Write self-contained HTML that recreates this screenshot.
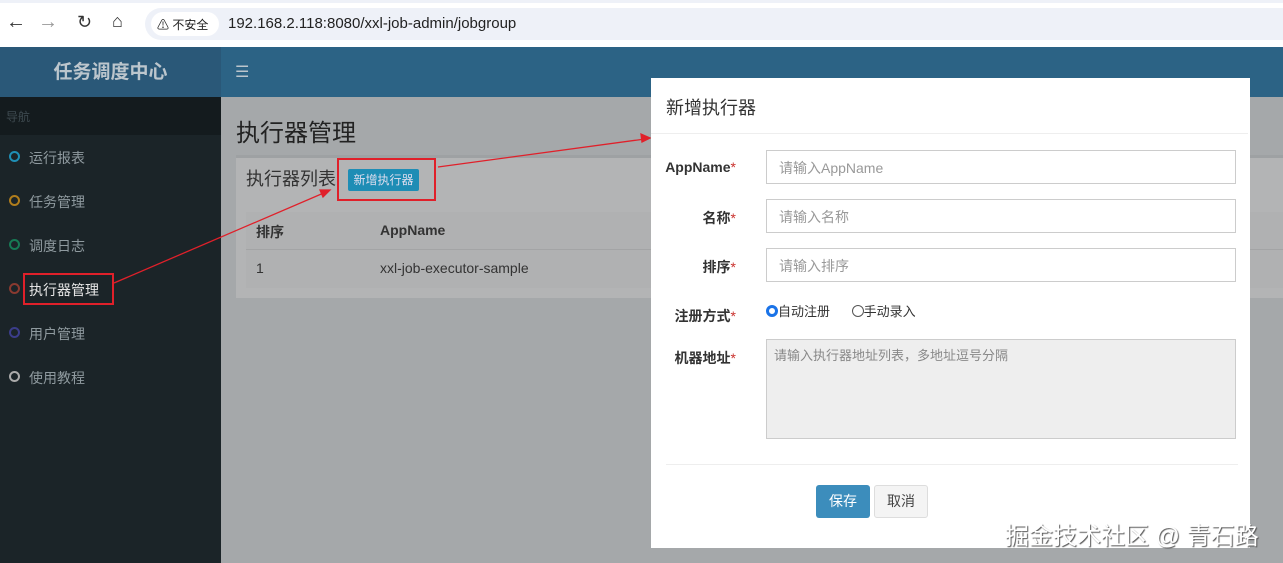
<!DOCTYPE html>
<html><head><meta charset="utf-8"><style>
*{box-sizing:border-box;margin:0;padding:0}
body{width:1283px;height:563px;overflow:hidden;position:relative;font-family:"Liberation Sans","Noto Sans CJK SC",sans-serif;background:#a5a8aa}
.abs{position:absolute}
.lbl{position:absolute;font-weight:bold;font-size:14px;color:#333;text-align:right;width:90px;left:646px}
.lbl i{color:#c9302c;font-style:normal;font-weight:normal}
.inp{position:absolute;left:766px;width:470px;height:34px;border:1px solid #ccc;background:#fff;font-size:14px;color:#999;padding:7px 12px}
.nav{position:absolute;left:29px;font-size:14px;color:#8f9a9f}
.ring{position:absolute;left:9px;width:11px;height:11px;border-radius:50%;border:2px solid}
</style></head><body>
<div class="abs" style="left:0;top:0;width:1283px;height:47px;background:#fff;border-top:3px solid #eef1f8"></div>
<div class="abs" style="left:6px;top:11px;font-size:20px;color:#333">&#8592;</div>
<div class="abs" style="left:38px;top:11px;font-size:20px;color:#999">&#8594;</div>
<div class="abs" style="left:77px;top:12px;font-size:18px;color:#333">&#8635;</div>
<div class="abs" style="left:112px;top:11px;font-size:18px;color:#333">&#8962;</div>
<div class="abs" style="left:145px;top:8px;width:1138px;height:32px;background:#eef1f8;border-radius:16px 0 0 16px"></div>
<div class="abs" style="left:151px;top:12px;width:68px;height:24px;background:#fff;border-radius:12px;font-size:12px;color:#222;padding:4px 6px">&#9888; 不安全</div>
<div class="abs" style="left:228px;top:15px;font-size:15px;color:#222">192.168.2.118:8080/xxl-job-admin/jobgroup</div>
<div class="abs" style="left:0;top:47px;width:221px;height:50px;background:#2a5878;color:#bcc6cd;font-weight:bold;font-size:19px;text-align:center;line-height:52px">任务调度中心</div>
<div class="abs" style="left:221px;top:47px;width:1062px;height:50px;background:#2c6385"></div>
<div class="abs" style="left:235px;top:62px;color:#bcc6cd;font-size:16px">&#9776;</div>
<div class="abs" style="left:0;top:97px;width:221px;height:466px;background:#1b2428"></div>
<div class="abs" style="left:0;top:97px;width:221px;height:38px;background:#141b1e;color:#3e4a50;font-size:12px;padding:11px 6px">导航</div>
<div class="ring" style="top:151px;border-color:#1f8fb5"></div><div class="nav" style="top:148px">运行报表</div>
<div class="ring" style="top:195px;border-color:#b07d1c"></div><div class="nav" style="top:192px">任务管理</div>
<div class="ring" style="top:239px;border-color:#177a55"></div><div class="nav" style="top:236px">调度日志</div>
<div class="ring" style="top:283px;border-color:#8a3a30"></div><div class="nav" style="top:280px;color:#e6e6e6">执行器管理</div>
<div class="ring" style="top:327px;border-color:#3b3d8a"></div><div class="nav" style="top:324px">用户管理</div>
<div class="ring" style="top:371px;border-color:#aaa"></div><div class="nav" style="top:368px">使用教程</div>
<div class="abs" style="left:23px;top:273px;width:91px;height:32px;border:2px solid #e0202a"></div>
<div class="abs" style="left:236px;top:113px;font-size:24px;color:#222">执行器管理</div>
<div class="abs" style="left:236px;top:155px;width:1047px;height:143px;background:#b3b4b5;border-top:3px solid #9ea1a3"></div>
<div class="abs" style="left:246px;top:165px;font-size:18px;color:#333">执行器列表</div>
<div class="abs" style="left:348px;top:169px;width:71px;height:22px;background:#1e8db5;color:#dde;font-size:12px;text-align:center;line-height:22px;border-radius:2px">新增执行器</div>
<div class="abs" style="left:337px;top:158px;width:99px;height:43px;border:2px solid #e0202a"></div>
<div class="abs" style="left:246px;top:212px;width:1037px;height:76px;background:#b0b1b2"></div>
<div class="abs" style="left:246px;top:212px;width:1037px;height:38px;border-bottom:1px solid #a3a4a5"></div>
<div class="abs" style="left:256px;top:222px;font-size:14px;font-weight:bold;color:#333">排序</div>
<div class="abs" style="left:380px;top:222px;font-size:14px;font-weight:bold;color:#333">AppName</div>
<div class="abs" style="left:256px;top:260px;font-size:14px;color:#333">1</div>
<div class="abs" style="left:380px;top:260px;font-size:14px;color:#333">xxl-job-executor-sample</div>
<svg class="abs" style="left:0;top:0" width="1283" height="563"><g stroke="#e0202a" stroke-width="1.3" fill="#e0202a">
<line x1="114" y1="283" x2="326" y2="192"/><polygon points="330,190 320,190 323,197"/>
<line x1="438" y1="167" x2="645" y2="139"/><polygon points="650,138 641,134 642,142"/></g></svg>
<div class="abs" style="left:651px;top:78px;width:599px;height:470px;background:#fff"></div>
<div class="abs" style="left:651px;top:133px;width:597px;height:1px;background:#eee"></div>
<div class="abs" style="left:666px;top:94px;font-size:18px;color:#333">新增执行器</div>
<div class="lbl" style="top:159px">AppName<i>*</i></div>
<div class="lbl" style="top:208px">名称<i>*</i></div>
<div class="lbl" style="top:257px">排序<i>*</i></div>
<div class="lbl" style="top:306px">注册方式<i>*</i></div>
<div class="lbl" style="top:348px">机器地址<i>*</i></div>
<div class="inp" style="top:150px">请输入AppName</div>
<div class="inp" style="top:199px">请输入名称</div>
<div class="inp" style="top:248px">请输入排序</div>
<div class="abs" style="left:766px;top:301px;font-size:13px;color:#333">
<span style="display:inline-block;width:12px;height:12px;border-radius:50%;border:3px solid #1a73e8;vertical-align:-1px"></span>自动注册
<span style="display:inline-block;width:12px;height:12px;border-radius:50%;border:1px solid #555;vertical-align:-1px;margin-left:18px"></span>手动录入</div>
<div class="abs" style="left:766px;top:339px;width:470px;height:100px;background:#eee;border:1px solid #ccc;font-size:13px;color:#888;padding:5px 7px">请输入执行器地址列表，多地址逗号分隔</div>
<div class="abs" style="left:666px;top:464px;width:572px;height:1px;background:#eee"></div>
<div class="abs" style="left:816px;top:485px;width:54px;height:33px;background:#3c8dbc;border-radius:3px;color:#fff;font-size:14px;text-align:center;line-height:33px">保存</div>
<div class="abs" style="left:874px;top:485px;width:54px;height:33px;background:#f4f4f4;border:1px solid #ddd;border-radius:3px;color:#444;font-size:14px;text-align:center;line-height:31px">取消</div>
<div class="abs" style="left:1005px;top:516px;font-size:24px;color:#fff;text-shadow:1px 1px 1px #555">掘金技术社区 @ 青石路</div>
</body></html>
